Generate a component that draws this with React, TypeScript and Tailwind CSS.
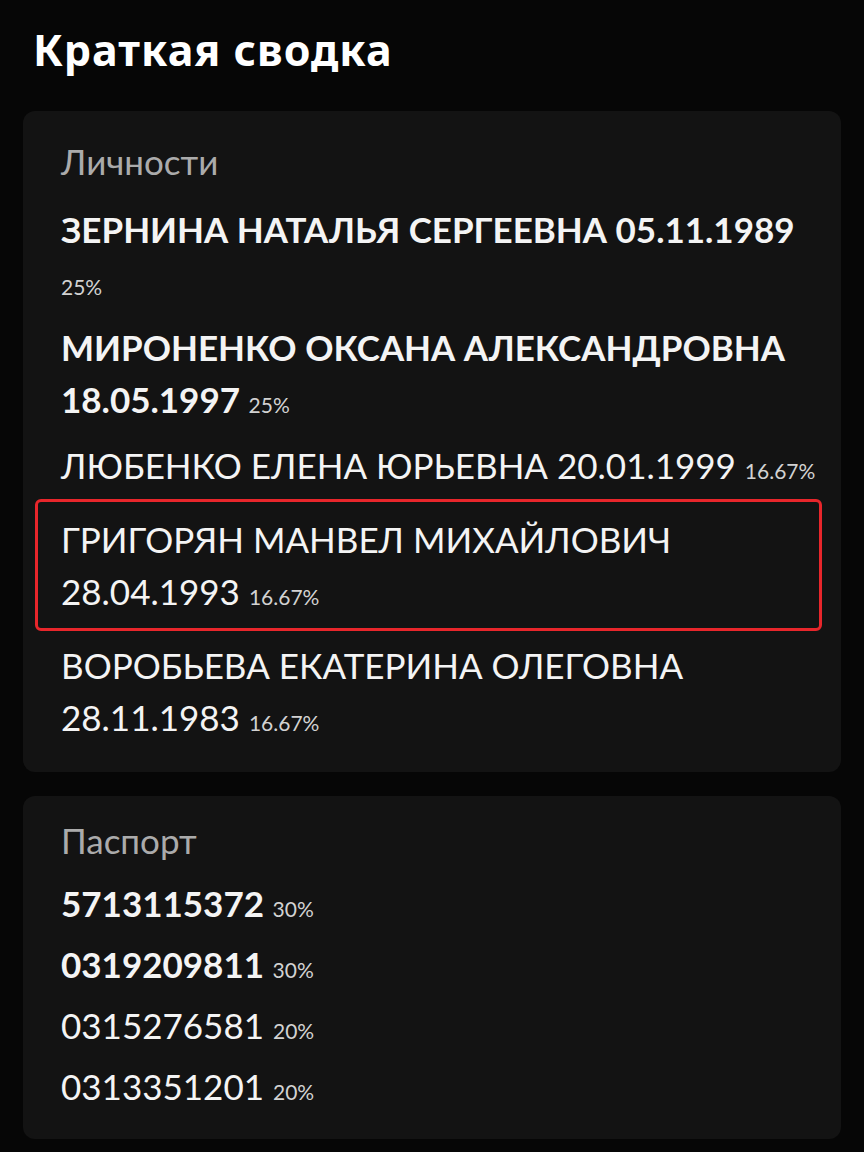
import React from 'react'

interface Person {
  name: string
  date: string
  pct: string
  bold?: boolean
  wrap?: 'date' | 'pct'
  highlight?: boolean
}

interface Passport {
  number: string
  pct: string
  bold?: boolean
}

const persons: Person[] = [
  { name: 'ЗЕРНИНА НАТАЛЬЯ СЕРГЕЕВНА', date: '05.11.1989', pct: '25%', bold: true, wrap: 'pct' },
  { name: 'МИРОНЕНКО ОКСАНА АЛЕКСАНДРОВНА', date: '18.05.1997', pct: '25%', bold: true, wrap: 'date' },
  { name: 'ЛЮБЕНКО ЕЛЕНА ЮРЬЕВНА', date: '20.01.1999', pct: '16.67%' },
  { name: 'ГРИГОРЯН МАНВЕЛ МИХАЙЛОВИЧ', date: '28.04.1993', pct: '16.67%', wrap: 'date', highlight: true },
  { name: 'ВОРОБЬЕВА ЕКАТЕРИНА ОЛЕГОВНА', date: '28.11.1983', pct: '16.67%', wrap: 'date' },
]

const passports: Passport[] = [
  { number: '5713115372', pct: '30%', bold: true },
  { number: '0319209811', pct: '30%', bold: true },
  { number: '0315276581', pct: '20%' },
  { number: '0313351201', pct: '20%' },
]

const Pct = ({ value }: { value: string }) => (
  <span className="text-[21px] font-normal leading-none text-[#d2d2d2]">{value}</span>
)

export default function App() {
  return (
    <div
      className="min-h-[1152px] bg-[#060606] px-[23px] pb-6 text-white"
      style={{ fontFamily: 'Lato, "Noto Sans", sans-serif' }}
    >
      <h1
        className="pl-[10px] pt-[25px] text-[43px] font-bold leading-[50px] tracking-[1px] text-white"
        style={{ fontFamily: '"Noto Sans", Lato, sans-serif' }}
      >
        Краткая сводка
      </h1>

      <section className="mt-[36px] rounded-xl bg-[#131313] px-[38px] pb-[29px] pt-[28px]">
        <h2 className="text-[35px] leading-[44px] text-[#ababab]">Личности</h2>
        <div className="mt-[20px] flex flex-col gap-[14px]">
          {persons.map((p) => (
            <p
              key={p.name}
              className={`whitespace-nowrap text-[35px] leading-[52px] text-[#f4f4f4] ${
                p.bold ? 'font-bold' : 'font-normal'
              } ${
                p.highlight
                  ? '-my-[6px] ml-[-26px] mr-[-19px] rounded-md border-[3px] border-[#e8262b] py-[11px] pl-[23px]'
                  : ''
              }`}
            >
              {p.name}
              {p.wrap === 'date' ? <br /> : ' '}
              {p.date}
              {p.wrap === 'pct' ? <br /> : ' '}
              <Pct value={p.pct} />
            </p>
          ))}
        </div>
      </section>

      <section className="mt-[24px] rounded-xl bg-[#131313] px-[38px] pb-[27px] pt-[22px]">
        <h2 className="text-[35px] leading-[44px] text-[#ababab]">Паспорт</h2>
        <div className="mt-[15px] flex flex-col gap-[9px]">
          {passports.map((p) => (
            <p
              key={p.number}
              className={`text-[35px] leading-[52px] text-[#f4f4f4] ${p.bold ? 'font-bold' : 'font-normal'}`}
            >
              {p.number} <Pct value={p.pct} />
            </p>
          ))}
        </div>
      </section>
    </div>
  )
}
